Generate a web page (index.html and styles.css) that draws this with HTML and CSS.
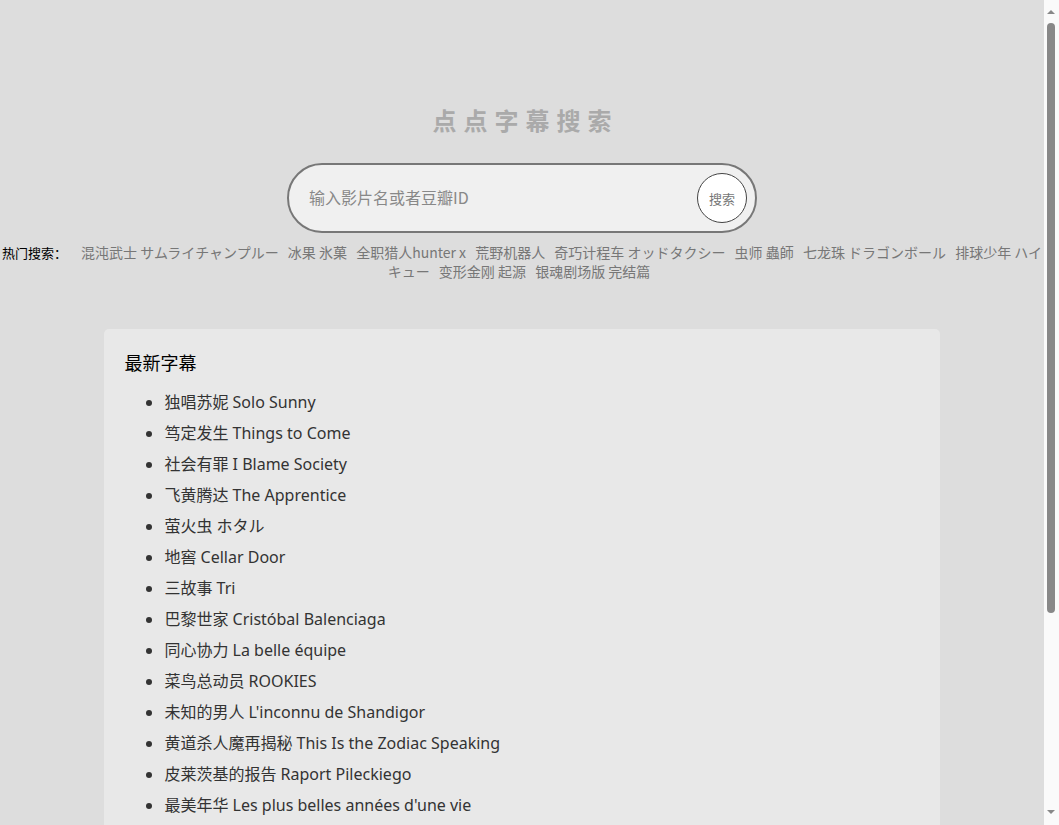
FILE: index.html
```html
<!DOCTYPE html>
<html lang="zh-CN">
<head>
<meta charset="utf-8">
<title>点点字幕搜索</title>
<link rel="stylesheet" href="styles.css">
</head>
<body>
<div class="page">
<header class="header">
  <h1 class="logo">点点字幕搜索</h1>
  <form class="search">
    <input class="search-input" type="text" placeholder="输入影片名或者豆瓣ID">
    <button class="search-btn" type="button">搜索</button>
  </form>
  <div class="hot">
    <span class="hot-label">热门搜索：</span>
    <a class="hot-item">混沌武士 サムライチャンプルー</a>
    <a class="hot-item">冰果 氷菓</a>
    <a class="hot-item">全职猎人hunter x</a>
    <a class="hot-item">荒野机器人</a>
    <a class="hot-item">奇巧计程车 オッドタクシー</a>
    <a class="hot-item">虫师 蟲師</a>
    <a class="hot-item">七龙珠 ドラゴンボール</a>
    <a class="hot-item">排球少年 ハイキュー</a>
    <a class="hot-item">变形金刚 起源</a>
    <a class="hot-item">银魂剧场版 完结篇</a>
  </div>
</header>
<main class="card">
  <h2 class="card-title">最新字幕</h2>
  <ul class="list">
    <li>独唱苏妮 Solo Sunny</li>
    <li>笃定发生 Things to Come</li>
    <li>社会有罪 I Blame Society</li>
    <li>飞黄腾达 The Apprentice</li>
    <li>萤火虫 ホタル</li>
    <li>地窖 Cellar Door</li>
    <li>三故事 Tri</li>
    <li>巴黎世家 Cristóbal Balenciaga</li>
    <li>同心协力 La belle équipe</li>
    <li>菜鸟总动员 ROOKIES</li>
    <li>未知的男人 L'inconnu de Shandigor</li>
    <li>黄道杀人魔再揭秘 This Is the Zodiac Speaking</li>
    <li>皮莱茨基的报告 Raport Pileckiego</li>
    <li>最美年华 Les plus belles années d'une vie</li>
    <li>荒野机器人 The Wild Robot</li>
    <li>虫师 蟲師</li>
    <li>七龙珠 ドラゴンボール</li>
    <li>变形金刚 起源 Transformers One</li>
    <li>排球少年 ハイキュー</li>
    <li>冰果 氷菓</li>
    <li>银魂剧场版 完结篇</li>
    <li>奇巧计程车 オッドタクシー</li>
  </ul>
</main>
</div>
<div class="scrollbar" aria-hidden="true">
  <span class="sb-arrow sb-up"></span>
  <span class="sb-thumb"></span>
  <span class="sb-arrow sb-down"></span>
</div>
</body>
</html>
```

FILE: styles.css
```css
html, body {
  margin: 0;
  padding: 0;
}
body {
  background: #dddddd;
  font-family: "Segoe UI", "Noto Sans", "Noto Sans CJK SC", sans-serif;
  color: #333;
}
.page {
  margin-right: 15px;
  padding-bottom: 20px;
}
.header {
  padding-top: 100px;
  text-align: center;
}
.logo {
  margin: 0;
  font-size: 24px;
  line-height: 40px;
  font-weight: bold;
  letter-spacing: 7px;
  color: #aaaaaa;
  font-family: "Noto Sans CJK SC", sans-serif;
  padding-left: 7px;
}
.search {
  margin: 23px auto 0;
  width: 470px;
  height: 70px;
  box-sizing: border-box;
  border: 2px solid #777;
  border-radius: 35px;
  background: #f0f0f0;
  display: flex;
  align-items: center;
  padding: 0 8px 2px 20px;
}
.search-input {
  flex: 1;
  border: 0;
  outline: 0;
  background: transparent;
  font-size: 16px;
  font-family: "Noto Sans CJK SC", sans-serif;
  color: #333;
  padding: 0;
}
.search-input::placeholder {
  color: #888;
}
.search-btn {
  width: 50px;
  height: 50px;
  border-radius: 50%;
  border: 1px solid #444;
  background: #fff;
  color: #777;
  font-size: 13px;
  font-family: "Noto Sans CJK SC", sans-serif;
  padding: 0;
  flex: none;
  margin-top: 2px;
}
.hot {
  margin-top: 10px;
  font-size: 14px;
  line-height: 19px;
  font-family: "Noto Sans CJK SC", sans-serif;
  padding: 0;
}
.hot-label {
  color: #000;
  font-size: 13px;
  margin-right: 11px;
}
.hot-item {
  color: #777;
  margin-right: 6px;
}
.card {
  display: block;
  width: 80%;
  box-sizing: border-box;
  margin: 48px auto 0;
  background: #e8e8e8;
  border-radius: 5px;
  padding: 21px 20px 20px;
}
.card-title {
  margin: 0;
  font-size: 18px;
  line-height: 24px;
  font-weight: normal;
  color: #000;
  font-family: "Noto Sans CJK SC", sans-serif;
}
.list {
  margin: 13px 0 0;
  padding-left: 40px;
  font-size: 16px;
  line-height: 31px;
  color: #333;
}
.scrollbar {
  position: fixed;
  top: 0;
  right: 0;
  bottom: 0;
  width: 15px;
  background: #fafafa;
}
.sb-thumb {
  position: absolute;
  left: 3px;
  width: 8px;
  top: 23px;
  height: 590px;
  background: #888;
  border-radius: 4px;
}
.sb-arrow {
  position: absolute;
  left: 3px;
  width: 0;
  height: 0;
  border-left: 4px solid transparent;
  border-right: 4px solid transparent;
}
.sb-up {
  top: 10px;
  border-bottom: 4px solid #888;
}
.sb-down {
  bottom: 11px;
  border-top: 4px solid #888;
}
```
